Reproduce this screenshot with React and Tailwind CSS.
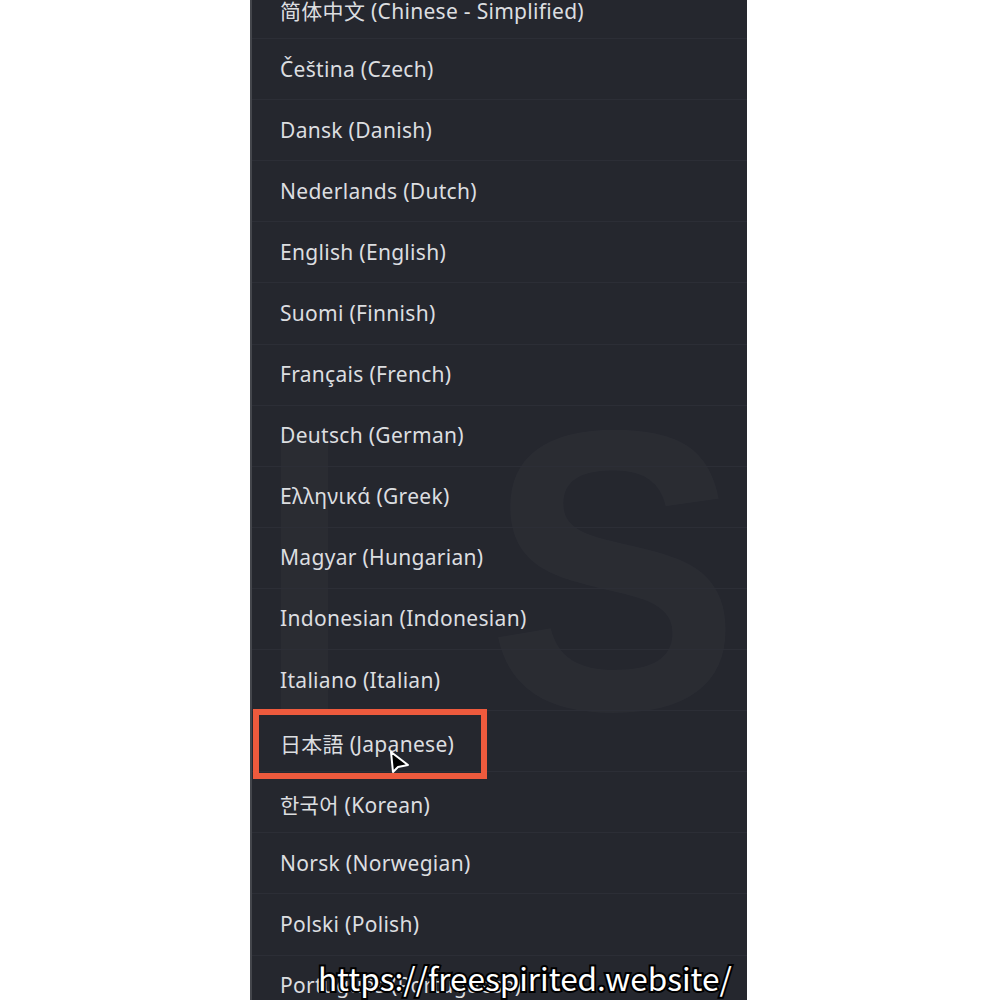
import React from "react";

const langs = [
  { t: "简体中文 (Chinese - Simplified)", cjk: "sc" },
  { t: "Čeština (Czech)" },
  { t: "Dansk (Danish)" },
  { t: "Nederlands (Dutch)" },
  { t: "English (English)" },
  { t: "Suomi (Finnish)" },
  { t: "Français (French)" },
  { t: "Deutsch (German)" },
  { t: "Ελληνικά (Greek)" },
  { t: "Magyar (Hungarian)" },
  { t: "Indonesian (Indonesian)" },
  { t: "Italiano (Italian)" },
  { t: "日本語 (Japanese)", cjk: "jp" },
  { t: "한국어 (Korean)", cjk: "kr" },
  { t: "Norsk (Norwegian)" },
  { t: "Polski (Polish)" },
  { t: "Português (Portuguese)" },
];

function Row({ item }) {
  const font =
    item.cjk === "sc"
      ? "font-['Noto_Sans','Noto_Sans_CJK_SC',sans-serif] relative top-[3px]"
      : item.cjk === "jp"
      ? "font-['Noto_Sans','Noto_Sans_CJK_JP',sans-serif] relative top-[3px]"
      : item.cjk === "kr"
      ? "font-['Noto_Sans','Noto_Sans_CJK_KR',sans-serif] relative top-[3px]"
      : "font-['Noto_Sans',sans-serif]";
  return (
    <div className="h-[61.1px] shrink-0 border-b border-[#2c2e36] flex items-center pl-[28px]">
      <span className={`${font} text-[21px] tracking-[0.3px] leading-none text-[#dcdee0] whitespace-nowrap`}>
        {item.t}
      </span>
    </div>
  );
}

export default function App() {
  return (
    <div className="w-[1000px] h-[1000px] bg-white overflow-hidden relative flex pl-[250px]">
      <div className="relative w-[497px] h-full bg-[#25272e] border-l-2 border-[#44464c] overflow-hidden">
        <span className="absolute left-[7px] top-[371px] origin-left scale-x-[0.82] font-['Liberation_Sans',sans-serif] font-bold text-[400px] leading-none text-white/[0.025] select-none">
          I
        </span>
        <span className="absolute left-[235px] top-[371px] origin-left scale-x-[0.95] font-['Liberation_Sans',sans-serif] font-bold text-[400px] leading-none text-white/[0.025] select-none">
          S
        </span>
        <div className="relative flex flex-col -mt-[22px]">
          {langs.map((l) => (
            <Row key={l.t} item={l} />
          ))}
        </div>
      </div>

      <div className="absolute left-[253px] top-[709px] w-[234px] h-[70px] border-[6px] border-[#ee5a3d]" />

      <svg
        className="absolute left-[388px] top-[750px]"
        width="24"
        height="26"
        viewBox="0 0 24 26"
      >
        <path
          d="M3 2 L5 22 L10 17 L20 15 Z"
          fill="#000"
          stroke="#fff"
          strokeWidth="2"
          strokeLinejoin="round"
        />
      </svg>

      <div className="absolute left-[318px] top-[962px] font-['Noto_Sans_CJK_JP',sans-serif] text-[31.5px] leading-none text-white whitespace-nowrap [-webkit-text-stroke:4px_#000] [paint-order:stroke_fill]">
        https://freespirited.website/
      </div>
    </div>
  );
}
